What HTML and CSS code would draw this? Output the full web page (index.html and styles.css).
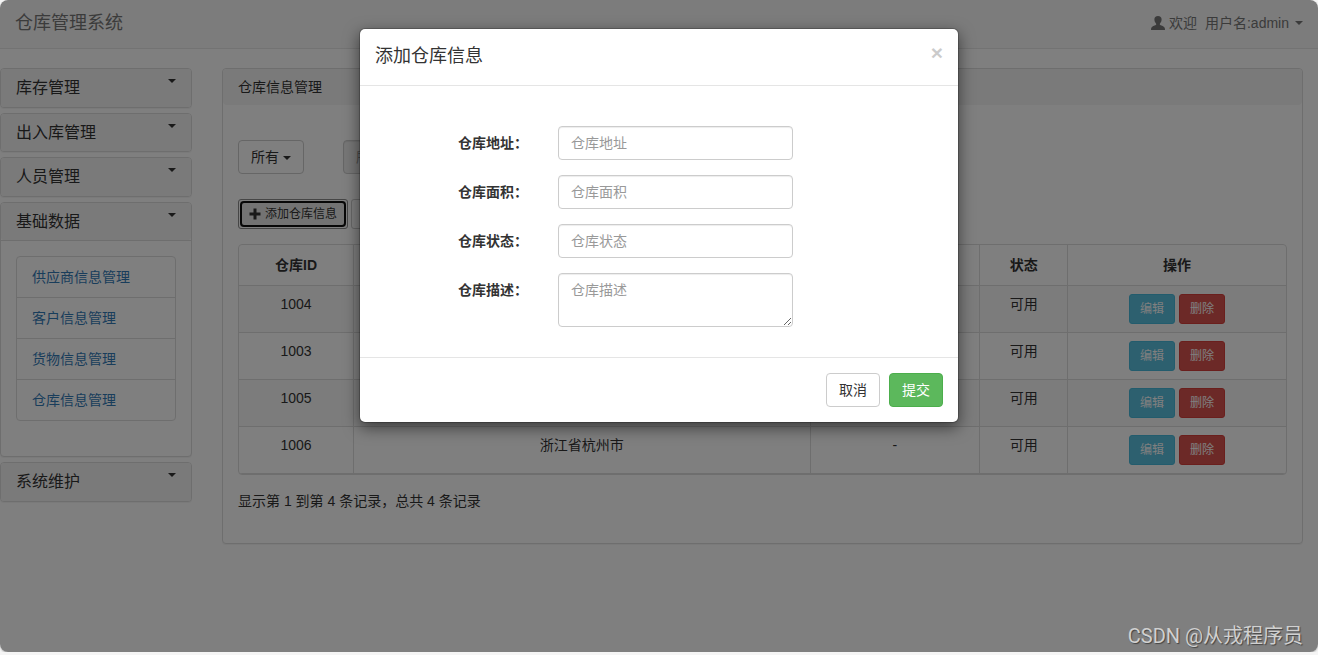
FILE: index.html
```html
<!DOCTYPE html>
<html lang="zh-CN">
<head>
<meta charset="utf-8">
<title>仓库管理系统</title>
<link rel="stylesheet" href="styles.css">
</head>
<body>
<div class="app">
  <header class="navbar">
    <a class="brand" href="#">仓库管理系统</a>
    <a class="user-menu" href="#">
      <svg class="icon-user" viewBox="0 0 14 14" aria-hidden="true"><path d="M7 0C4.700 0 3.300 1.400 3.400 3.600c0 1.500.6 2.900 1.600 3.900.3.500.3 1.200-.1 1.500C3.200 9.800 1.200 10.300.5 11.400.1 12 0 12.900 0 14h14c0-1.100-.1-2-.5-2.600-.7-1.100-2.700-1.600-4.400-2.400-.4-.3-.4-1-.1-1.500 1-1 1.600-2.400 1.600-3.900C10.700 1.400 9.300 0 7 0z"/></svg>
      <span class="welcome">欢迎</span>
      <span>用户名:admin</span>
      <span class="caret"></span>
    </a>
  </header>

  <div class="layout">
    <nav class="sidebar">
      <section class="panel">
        <h4 class="menu-heading"><a href="#">库存管理</a><span class="caret"></span></h4>
      </section>
      <section class="panel">
        <h4 class="menu-heading"><a href="#">出入库管理</a><span class="caret"></span></h4>
      </section>
      <section class="panel">
        <h4 class="menu-heading"><a href="#">人员管理</a><span class="caret"></span></h4>
      </section>
      <section class="panel">
        <h4 class="menu-heading"><a href="#">基础数据</a><span class="caret"></span></h4>
        <div class="menu-body">
          <ul class="menu-list">
            <li><a href="#">供应商信息管理</a></li>
            <li><a href="#">客户信息管理</a></li>
            <li><a href="#">货物信息管理</a></li>
            <li><a href="#">仓库信息管理</a></li>
          </ul>
        </div>
      </section>
      <section class="panel">
        <h4 class="menu-heading"><a href="#">系统维护</a><span class="caret"></span></h4>
      </section>
    </nav>

    <main class="panel main">
      <div class="breadcrumb">仓库信息管理</div>
      <div class="main-body">
        <div class="filters">
          <button class="btn" type="button">所有 <span class="caret"></span></button>
          <input class="control filter-input" type="text" placeholder="所有" aria-label="查询条件" disabled>
        </div>
        <div class="toolbar">
          <button class="btn btn-sm is-focused" type="button"><svg class="icon-plus" viewBox="0 0 12 12" aria-hidden="true"><path d="M4.500.5h3v4h4v3h-4v4h-3v-4h-4v-3h4z"/></svg>添加仓库信息</button>
          <button class="btn btn-sm btn-more" type="button" aria-label="更多"></button>
        </div>
        <div class="table-box">
          <table class="table">
            <colgroup><col class="col-id"><col class="col-address"><col class="col-desc"><col class="col-state"><col></colgroup>
            <thead>
              <tr><th>仓库ID</th><th></th><th></th><th>状态</th><th>操作</th></tr>
            </thead>
            <tbody>
              <tr><td>1004</td><td></td><td></td><td>可用</td><td><div class="actions"><button class="btn btn-sm btn-info" type="button">编辑</button><button class="btn btn-sm btn-danger" type="button">删除</button></div></td></tr>
              <tr><td>1003</td><td></td><td></td><td>可用</td><td><div class="actions"><button class="btn btn-sm btn-info" type="button">编辑</button><button class="btn btn-sm btn-danger" type="button">删除</button></div></td></tr>
              <tr><td>1005</td><td></td><td></td><td>可用</td><td><div class="actions"><button class="btn btn-sm btn-info" type="button">编辑</button><button class="btn btn-sm btn-danger" type="button">删除</button></div></td></tr>
              <tr><td>1006</td><td>浙江省杭州市</td><td>-</td><td>可用</td><td><div class="actions"><button class="btn btn-sm btn-info" type="button">编辑</button><button class="btn btn-sm btn-danger" type="button">删除</button></div></td></tr>
            </tbody>
          </table>
        </div>
        <p class="summary">显示第 1 到第 4 条记录，总共 4 条记录</p>
      </div>
    </main>
  </div>

  <div class="backdrop"></div>

  <div class="modal" role="dialog" aria-labelledby="modal-title">
    <div class="modal-header">
      <h4 class="modal-title" id="modal-title">添加仓库信息</h4>
      <button class="close" type="button" aria-label="关闭">×</button>
    </div>
    <form class="modal-form">
      <label for="address">仓库地址：</label>
      <input class="control" id="address" type="text" placeholder="仓库地址">
      <label for="area">仓库面积：</label>
      <input class="control" id="area" type="text" placeholder="仓库面积">
      <label for="state">仓库状态：</label>
      <input class="control" id="state" type="text" placeholder="仓库状态">
      <label for="desc">仓库描述：</label>
      <textarea class="control" id="desc" rows="2" placeholder="仓库描述"></textarea>
    </form>
    <div class="modal-footer">
      <button class="btn" type="button">取消</button>
      <button class="btn btn-success" type="button">提交</button>
    </div>
  </div>
</div>
<div class="watermark">CSDN @从戎程序员</div>
</body>
</html>
```
FILE: styles.css
```css
* { box-sizing: border-box; }

body {
  margin: 0;
  background: #f5f5f5;
  color: #333;
  font-family: "Liberation Sans", "Noto Sans CJK SC", sans-serif;
  font-size: 14px;
  line-height: 20px;
}

button, input, textarea { font: inherit; }
a { color: #337ab7; text-decoration: none; }
h4 { margin: 0; font-weight: 400; }

.app {
  position: relative;
  min-height: calc(100vh - 3px);
  overflow: hidden;
  border-radius: 8px;
  background: #fff;
  box-shadow: 0 1px 2px rgba(0, 0, 0, .25);
}

.caret {
  display: inline-block;
  border-top: 4px solid;
  border-right: 4px solid transparent;
  border-left: 4px solid transparent;
  vertical-align: middle;
}

/* Top bar */
.navbar {
  display: flex;
  justify-content: space-between;
  align-items: center;
  padding: 13px 15px 15px;
  border-bottom: 1px solid #e7e7e7;
  background: #f8f8f8;
}
.brand { color: #777; font-size: 18px; }
.user-menu { display: flex; align-items: center; gap: 4px; color: #777; }
.user-menu .welcome { margin-right: 4px; }
.user-menu .caret { margin-left: 2px; }
.icon-user { width: 14px; height: 14px; fill: #777; }

.layout {
  display: flex;
  align-items: flex-start;
  gap: 30px;
  padding: 19px 15px 0 0;
}

.panel {
  border: 1px solid #ddd;
  border-radius: 4px;
  background: #fff;
  box-shadow: 0 1px 1px rgba(0, 0, 0, .05);
}

/* Side menu */
.sidebar {
  display: flex;
  flex: 0 0 192px;
  flex-direction: column;
  gap: 5px;
}
.menu-heading {
  display: flex;
  justify-content: space-between;
  align-items: flex-start;
  padding: 10px 15px;
  border-radius: 3px;
  background: #f5f5f5;
  font-size: 16px;
  line-height: 1.1;
}
.menu-heading a { color: #333; }
.menu-body { padding: 15px 15px 35px; border-top: 1px solid #ddd; }
.menu-list {
  margin: 0;
  padding: 0;
  border: 1px solid #ddd;
  border-radius: 4px;
  list-style: none;
}
.menu-list li { padding: 10px 15px; }
.menu-list li + li { border-top: 1px solid #ddd; }

/* Content panel */
.main { flex: 1; min-width: 0; }
.breadcrumb { padding: 8px 15px; border-radius: 4px; background: #f5f5f5; }
.main-body { padding: 35px 15px 25px; }
.filters { display: flex; gap: 39px; }
.toolbar { display: flex; gap: 3px; margin: 25px 0 15px; }

.btn {
  padding: 6px 12px;
  border: 1px solid #ccc;
  border-radius: 4px;
  background: #fff;
  color: #333;
  line-height: 20px;
}
.btn-sm { padding: 5px 10px; border-radius: 3px; font-size: 12px; line-height: 18px; }
.btn-more { width: 80px; }
.btn-info { border-color: #46b8da; background: #5bc0de; color: #fff; }
.btn-danger { border-color: #d43f3a; background: #d9534f; color: #fff; }
.btn-success { border-color: #4cae4c; background: #5cb85c; color: #fff; }
.is-focused {
  position: relative;
  display: flex;
  align-items: center;
  gap: 4px;
  border-color: #8c8c8c;
  background: #e6e6e6;
  box-shadow: inset 0 0 0 1px #fff;
}
.is-focused::after {
  content: "";
  position: absolute;
  inset: 1px;
  border: 2px solid #101010;
  border-radius: 4px;
}
.icon-plus { width: 12px; height: 12px; fill: #333; }

.control {
  display: block;
  width: 100%;
  padding: 6px 12px;
  border: 1px solid #ccc;
  border-radius: 4px;
  background: #fff;
  color: #555;
  line-height: 20px;
  box-shadow: inset 0 1px 1px rgba(0, 0, 0, .075);
}
.control::placeholder { color: #999; }
.control:disabled { background: #eee; }
input.control { height: 34px; }
textarea.control { height: 54px; }
.filters .filter-input { width: 300px; }

.table-box { overflow: hidden; border: 1px solid #ddd; border-radius: 4px; }
.table {
  width: 100%;
  table-layout: fixed;
  border-spacing: 0;
  border-bottom: 1px solid #ddd;
  text-align: center;
}
.table th { height: 40px; padding: 0 8px; }
.table td { padding: 8px; border-top: 1px solid #ddd; vertical-align: top; }
.table th + th, .table td + td { border-left: 1px solid #ddd; }
.table tbody tr:nth-child(odd) { background: #f9f9f9; }
.col-id { width: 10.9%; }
.col-address { width: 43.6%; }
.col-desc { width: 16.2%; }
.col-state { width: 8.4%; }
.actions { display: flex; justify-content: center; gap: 4px; }
.summary { margin: 9px 0 0; line-height: 34px; }

/* Dialog */
.backdrop { position: absolute; inset: 0; background: rgba(0, 0, 0, .5); }
.modal {
  position: absolute;
  top: 28px;
  right: 0;
  left: 0;
  width: 600px;
  margin: 0 auto;
  border: 1px solid rgba(0, 0, 0, .2);
  border-radius: 6px;
  background: #fff;
  background-clip: padding-box;
  box-shadow: 0 5px 15px rgba(0, 0, 0, .5);
}
.modal-header {
  display: flex;
  justify-content: space-between;
  align-items: flex-start;
  padding: 14px 15px 16px;
  border-bottom: 1px solid #e5e5e5;
}
.modal-title { font-size: 18px; line-height: 26px; }
.close {
  padding: 0;
  border: 0;
  background: none;
  color: #000;
  font-size: 21px;
  font-weight: 700;
  line-height: 20px;
  opacity: .2;
}
.modal-form {
  display: grid;
  grid-template-columns: auto 1fr;
  gap: 15px 30px;
  padding: 40px 165px 30px 98px;
}
.modal-form label { padding-top: 7px; font-weight: 700; }
.modal-footer {
  display: flex;
  justify-content: flex-end;
  gap: 9px;
  padding: 15px;
  border-top: 1px solid #e5e5e5;
}

.watermark {
  position: absolute;
  right: 15px;
  bottom: 5px;
  color: #d0d0d0;
  font-family: Roboto, "Noto Sans CJK SC", sans-serif;
  font-size: 20px;
  font-weight: 400;
  line-height: 28px;
  text-shadow: 1px 1px 1px #444;
}
```
